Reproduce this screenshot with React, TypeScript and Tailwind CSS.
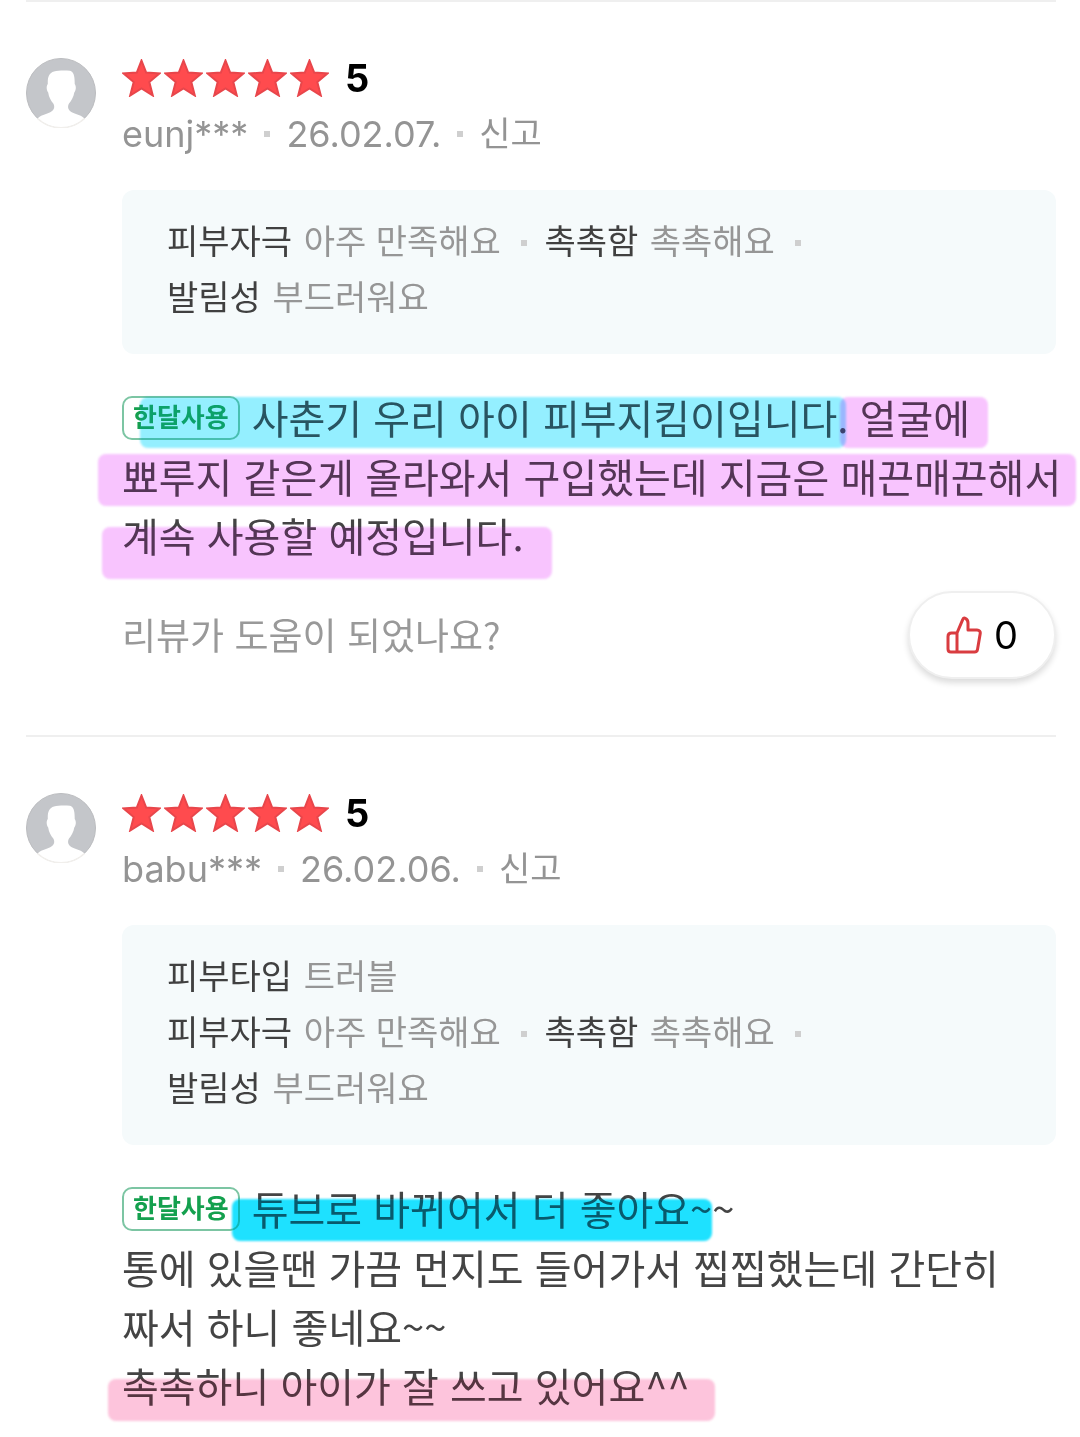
import React from 'react';

interface Attribute {
  label: string;
  value: string;
}

interface Marker {
  box: string;
  paint: string;
  ink: string; // tint of the letters under the stroke
}

interface Review {
  id: number;
  user: string;
  date: string;
  rating: number;
  attributes: Attribute[][];
  badge: string;
  text: string;
  markers: Marker[];
  helpfulCount?: number;
}

const reviews: Review[] = [
  {
    id: 1,
    user: 'eunj***',
    date: '26.02.07.',
    rating: 5,
    attributes: [
      [
        { label: '피부자극', value: '아주 만족해요' },
        { label: '촉촉함', value: '촉촉해요' },
        { label: '발림성', value: '부드러워요' },
      ],
    ],
    badge: '한달사용',
    text: '사춘기 우리 아이 피부지킴이입니다. 얼굴에 뾰루지 같은게 올라와서 구입했는데 지금은 매끈매끈해서 계속 사용할 예정입니다.',
    markers: [
      { box: 'left-[18px] top-[9px] w-[706px] h-[51px]', paint: 'bg-[#94edff]', ink: 'bg-[#001c28]' },
      { box: 'left-[718px] top-[9px] w-[148px] h-[51px]', paint: 'bg-[#f7c4fe]', ink: 'bg-[#180018]' },
      { box: '-left-6 top-[66px] w-[978px] h-[52px]', paint: 'bg-[#f7c4fe]', ink: 'bg-[#180018]' },
      { box: '-left-5 top-[139px] w-[450px] h-[52px]', paint: 'bg-[#f7c4fe]', ink: 'bg-[#180018]' },
    ],
    helpfulCount: 0,
  },
  {
    id: 2,
    user: 'babu***',
    date: '26.02.06.',
    rating: 5,
    attributes: [
      [{ label: '피부타입', value: '트러블' }],
      [
        { label: '피부자극', value: '아주 만족해요' },
        { label: '촉촉함', value: '촉촉해요' },
        { label: '발림성', value: '부드러워요' },
      ],
    ],
    badge: '한달사용',
    text: '튜브로 바뀌어서 더 좋아요~~\n통에 있을땐 가끔 먼지도 들어가서 찝찝했는데 간단히 짜서 하니 좋네요~~\n촉촉하니 아이가 잘 쓰고 있어요^^',
    markers: [
      { box: 'left-[110px] top-5 w-[480px] h-[42px]', paint: 'bg-[#1edcff]', ink: 'bg-[#002838]' },
      { box: '-left-3.5 top-[200px] w-[607px] h-[42px]', paint: 'bg-[#fdc4db]', ink: 'bg-[#180008]' },
    ],
  },
];

function Avatar() {
  return (
    <svg viewBox="0 0 70 70" className="size-[70px] shrink-0" aria-hidden="true">
      <circle cx="35" cy="35" r="34.5" fill="#c4c6ca" stroke="#bbbcbf" />
      <path
        d="M28 13.500C32 12.300 39 12.500 44 12.700C47.500 14 48.800 17 48.700 26C50.300 28 50.200 32 48.300 34.500C47.500 39 45.500 42.500 43 45.500C41.500 48 41.800 51 44 53C47 56 54 56 58.500 60.500A34.500 34.500 0 0 1 11.500 60.500C16 56 23 56 26 53C28.500 51 28.800 48 27.300 45.500C24.800 42.500 22.800 39 22.200 34.500C20.300 32 20.200 28 21.800 26C21.500 19 23 15 28 13.500Z"
        fill="#fff"
      />
      <path d="M11.500 60.500A34.500 34.500 0 0 0 58.500 60.500" fill="none" stroke="#f1efec" strokeWidth="1.500" />
    </svg>
  );
}

function Star() {
  return (
    <svg viewBox="0 0 39 38" className="h-[38px] w-[39px]" aria-hidden="true">
      <path
        d="M19.500 1.500L24.200 13.500L37.500 14.500L27.300 23L30.800 36.500L19.500 29.500L8.200 36.500L11.700 23L1.500 14.500L14.800 13.500Z"
        fill="#ff4b4e"
        stroke="#e8464b"
        strokeWidth="2"
      />
    </svg>
  );
}

function ThumbIcon() {
  return (
    <svg
      viewBox="0 0 36 38"
      className="h-[38px] w-9"
      fill="none"
      stroke="#d93c40"
      strokeWidth="3"
      strokeLinejoin="round"
      aria-hidden="true"
    >
      <path d="M11 17L16.800 3.300C17.200 2.200 18.300 1.800 19.300 2.300C21.200 3.200 22 5 22 7V14H31C33.200 14 34.600 15.500 34.200 17.600L31.500 33.500C31.200 35.200 30.200 36 28.500 36H5C3 36 2 35 2 33V20.500C2 18.300 3.500 17 5.500 17H11V36" />
    </svg>
  );
}

function Dot({ className }: { className: string }) {
  return <span className={`inline-block size-1.5 shrink-0 bg-[#cfcfcf] ${className}`} />;
}

function MarkerStroke({ marker }: { marker: Marker }) {
  return (
    <>
      <span
        className={`pointer-events-none absolute rounded-lg mix-blend-multiply blur-[1px] ${marker.box} ${marker.paint}`}
      />
      <span className={`pointer-events-none absolute mix-blend-screen ${marker.box} ${marker.ink}`} />
    </>
  );
}

function ReviewItem({ review }: { review: Review }) {
  return (
    <article className="flex gap-[26px] border-t-2 border-[#efefef] pt-14">
      <Avatar />

      <div className="min-w-0 flex-1">
        {/* Rating */}
        <div className="flex h-10 items-center gap-4">
          <div className="flex gap-[3px]" role="img" aria-label={`별점 ${review.rating}점`}>
            {Array.from({ length: review.rating }, (_, i) => (
              <Star key={i} />
            ))}
          </div>
          <strong className="font-[Inter,sans-serif] text-[38px] leading-10 font-bold text-black">
            {review.rating}
          </strong>
        </div>

        {/* Meta */}
        <div className="mt-3 flex h-12 items-center font-[Inter,'Noto_Sans_CJK_KR',sans-serif] text-[36px] leading-[48px] text-[#949494]">
          <span>{review.user}</span>
          <Dot className="mx-4" />
          <span>{review.date}</span>
          <Dot className="mx-4" />
          <button type="button" className="text-[34px]">
            신고
          </button>
        </div>

        {/* Attributes */}
        <div className="mt-8 rounded-xl bg-[#f5fafb] pt-[22px] pr-[200px] pb-[30px] pl-[45px] text-[34px] leading-14 break-keep text-[#969696]">
          {review.attributes.map((group, i) => (
            <p key={i}>
              {group.map((attr, j) => (
                <React.Fragment key={attr.label}>
                  <span className="mr-0.5 text-[#404040]">{attr.label}</span> {attr.value}
                  {j < group.length - 1 && (
                    <>
                      <Dot className="mr-2 mb-1 ml-5 align-middle" />{' '}
                    </>
                  )}
                </React.Fragment>
              ))}
            </p>
          ))}
        </div>

        {/* Body */}
        <div className="relative mt-[34px]">
          <p className="-mr-3 text-[40px] leading-[59px] break-keep whitespace-pre-line text-[#444]">
            <span className="mt-2 mr-3 inline-flex h-11 items-center rounded-[10px] border-2 border-[#7cc5a3] px-[9px] pb-1 align-top text-[26px] leading-9 font-bold text-[#14a04e]">
              {review.badge}
            </span>
            {review.text}
          </p>
          {review.markers.map((marker) => (
            <MarkerStroke key={marker.box} marker={marker} />
          ))}
        </div>

        {/* Helpful */}
        {review.helpfulCount !== undefined && (
          <div className="mt-[26px] mb-14 flex items-center justify-between text-[37px] text-[#999]">
            <span>리뷰가 도움이 되었나요?</span>
            <button
              type="button"
              aria-label={`도움돼요 ${review.helpfulCount}`}
              className="flex h-[88px] w-[148px] items-center justify-center gap-3 rounded-full border-2 border-[#efefef] bg-white font-[Inter,sans-serif] text-[38px] text-black shadow-[0_4px_6px_rgba(0,0,0,0.14)]"
            >
              <ThumbIcon />
              {review.helpfulCount}
            </button>
          </div>
        )}
      </div>
    </article>
  );
}

export default function App() {
  return (
    <main
      lang="ko"
      className="min-h-screen overflow-x-hidden bg-white pr-6 pb-5 pl-[26px] font-['Noto_Sans_CJK_KR',sans-serif]"
    >
      {reviews.map((review) => (
        <ReviewItem key={review.id} review={review} />
      ))}
    </main>
  );
}
